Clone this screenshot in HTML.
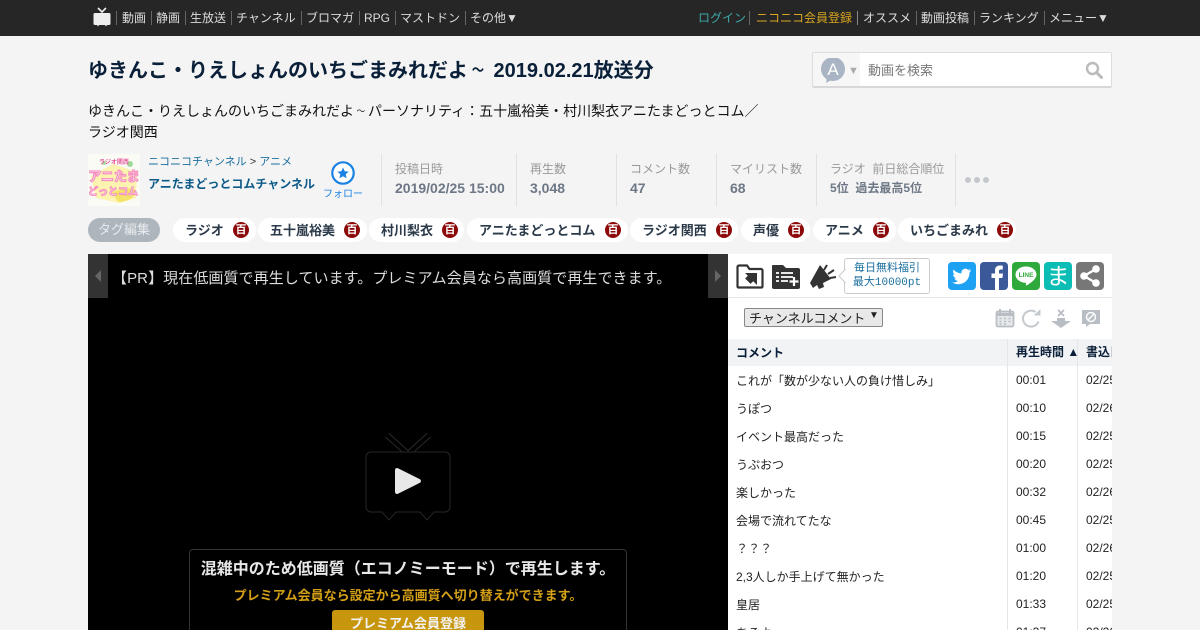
<!DOCTYPE html>
<html lang="ja"><head><meta charset="utf-8"><title>ゆきんこ・りえしょんのいちごまみれだよ～</title>
<style>
*{box-sizing:border-box}
html,body{margin:0;padding:0;width:1200px;height:630px;overflow:hidden}
#w{position:absolute;left:0;top:0;width:1200px;height:630px;overflow:hidden;background:#f4f4f4;font-family:"Liberation Sans","WenQuanYi Zen Hei","Noto Sans CJK JP",sans-serif;color:#000}
.a{position:absolute;white-space:nowrap}
#hd{left:0;top:0;width:1200px;height:36px;background:#262626}
.n{position:absolute;top:10px;font-size:12px;line-height:16px;color:#ddd;white-space:nowrap}
.s{position:absolute;top:11px;width:1px;height:14px;background:#666}
.lab{position:absolute;top:161px;font-size:12px;line-height:16px;color:#999;white-space:nowrap}
.val{position:absolute;top:180px;font-size:14px;line-height:17px;font-weight:bold;color:#6d7785;white-space:nowrap}
.dv{position:absolute;top:154px;width:1px;height:52px;background:#e2e2e2}
.tag{position:absolute;top:218px;height:24px;background:#fff;border-radius:12px}
.tag b{position:absolute;top:5px;font-size:13px;line-height:16px;font-weight:bold;color:#2b3a4a;white-space:nowrap}
.tag i{position:absolute;top:4px;width:16px;height:16px;border-radius:8px;background:#8c0a0a;color:#fff;font-style:normal;font-weight:bold;font-size:11px;line-height:16px;text-align:center}
.r{position:absolute;left:736px;font-size:12px;line-height:16px;color:#222;white-space:nowrap}
.t{position:absolute;left:1016px;font-size:12px;line-height:16px;color:#222}
.d{position:absolute;left:1086px;width:26px;overflow:hidden;font-size:12px;line-height:16px;color:#222}
.sn{position:absolute;top:262px;width:28px;height:28px;border-radius:4px}
.w{display:inline-block;transform:scale(.62,.7)}
</style></head><body><div id="w">
<div class="a" id="hd"></div>
<svg class="a" style="left:93px;top:7px" width="19" height="20" viewBox="0 0 19 20"><path d="M5 1l4 4 4-4" stroke="#eee" stroke-width="1.600" fill="none"/><path d="M2 6h14a1.500 1.500 0 0 1 1.500 1.500v9a1.500 1.500 0 0 1-1.500 1.500h-2l-1 1.500-1-1.500H6l-1 1.500-1-1.500H2a1.500 1.500 0 0 1-1.500-1.500v-9A1.500 1.500 0 0 1 2 6z" fill="#eee"/></svg>
<div class="s" style="left:116px"></div><span class="n" style="left:122px">動画</span>
<div class="s" style="left:151px"></div><span class="n" style="left:156px">静画</span>
<div class="s" style="left:185px"></div><span class="n" style="left:190px">生放送</span>
<div class="s" style="left:231px"></div><span class="n" style="left:236px">チャンネル</span>
<div class="s" style="left:301px"></div><span class="n" style="left:306px">ブロマガ</span>
<div class="s" style="left:359px"></div><span class="n" style="left:364px">RPG</span>
<div class="s" style="left:395px"></div><span class="n" style="left:400px">マストドン</span>
<div class="s" style="left:465px"></div><span class="n" style="left:470px">その他▼</span>
<span class="n" style="left:698px;color:#3fa8a8">ログイン</span>
<div class="s" style="left:749px"></div><span class="n" style="left:756px;color:#d9a520">ニコニコ会員登録</span>
<div class="s" style="left:857px;background:#888"></div><span class="n" style="left:863px">オススメ</span>
<div class="s" style="left:916px"></div><span class="n" style="left:921px">動画投稿</span>
<div class="s" style="left:974px"></div><span class="n" style="left:979px">ランキング</span>
<div class="s" style="left:1044px"></div><span class="n" style="left:1049px">メニュー▼</span>

<div class="a" style="left:88px;top:57px;font-size:20px;line-height:28px;font-weight:bold;color:#0a1f38">ゆきんこ・りえしょんのいちごまみれだよ<span class="w">～</span> 2019.02.21放送分</div>
<div class="a" style="left:812px;top:52px;width:300px;height:36px;background:#fff;border:1px solid #ddd;border-bottom:2px solid #d8d8d8;border-radius:2px"></div>
<div class="a" style="left:813px;top:53px;width:47px;height:33px;background:#f6f6f6"></div>
<svg class="a" style="left:820px;top:58px" width="26" height="26" viewBox="0 0 26 26"><circle cx="13" cy="11" r="12" fill="#a9b5c4"/><path d="M7 19l-1 6 7-4z" fill="#a9b5c4"/><text x="13" y="17" text-anchor="middle" font-size="17" fill="#fff" font-family="Liberation Sans">A</text></svg>
<div class="a" style="left:848px;top:65px;font-size:11px;line-height:12px;color:#aaa">▼</div>
<div class="a" style="left:868px;top:62px;font-size:13px;line-height:18px;color:#777">動画を検索</div>
<svg class="a" style="left:1085px;top:61px" width="18" height="18" viewBox="0 0 18 18"><circle cx="7.500" cy="7.500" r="5.500" fill="none" stroke="#bbb" stroke-width="2.400"/><path d="M11.500 11.500l5 5" stroke="#bbb" stroke-width="3" stroke-linecap="round"/></svg>

<div class="a" style="left:88px;top:101px;font-size:14px;line-height:21px;color:#111">ゆきんこ・りえしょんのいちごまみれだよ<span class="w">～</span>パーソナリティ：五十嵐裕美・村川梨衣アニたまどっとコム／<br>ラジオ関西</div>

<svg class="a" style="left:88px;top:154px" width="52" height="52" viewBox="0 0 52 52"><rect width="52" height="52" fill="#fbfbf6"/><path d="M3 22L25 10l24 8-1 26-16 5-24-5z" fill="#fdf3b0"/><path d="M24 38c10-3 19-5 23-2 2 6-6 12-17 12z" fill="#f3e36a"/><circle cx="42" cy="10" r="3" fill="#9fdc9a"/><circle cx="16" cy="9" r="2" fill="#9fdc9a"/><text x="26" y="10" text-anchor="middle" font-size="6" fill="#e65a9c" font-weight="bold">ラジオ関西</text><text x="26" y="27" text-anchor="middle" font-size="13" font-weight="bold" fill="#fff" stroke="#f590c0" stroke-width="1.200">アニたま</text><text x="25" y="41" text-anchor="middle" font-size="10" font-weight="bold" fill="#fff" stroke="#f590c0" stroke-width="1">どっとコム</text></svg>
<div class="a" style="left:148px;top:154px;font-size:11px;line-height:16px;color:#1a6f9f">ニコニコチャンネル <span style="color:#333">&gt;</span> アニメ</div>
<div class="a" style="left:148px;top:176px;font-size:12px;line-height:16px;font-weight:bold;color:#0c5a8a">アニたまどっとコムチャンネル</div>
<svg class="a" style="left:331px;top:161px" width="24" height="24" viewBox="0 0 24 24"><circle cx="12" cy="12" r="10.700" fill="#fff" stroke="#1a82e2" stroke-width="2.200"/><path d="M12 6.500l1.700 3.700 4 .4-3 2.700.9 4-3.600-2.100-3.600 2.100.9-4-3-2.700 4-.4z" fill="#1a82e2"/></svg>
<div class="a" style="left:323px;top:187px;font-size:10px;line-height:15px;color:#1a82e2;letter-spacing:0">フォロー</div>

<div class="dv" style="left:381px"></div>
<span class="lab" style="left:395px">投稿日時</span><span class="val" style="left:395px">2019/02/25 15:00</span>
<div class="dv" style="left:516px"></div>
<span class="lab" style="left:530px">再生数</span><span class="val" style="left:530px">3,048</span>
<div class="dv" style="left:616px"></div>
<span class="lab" style="left:630px">コメント数</span><span class="val" style="left:630px">47</span>
<div class="dv" style="left:716px"></div>
<span class="lab" style="left:730px">マイリスト数</span><span class="val" style="left:730px">68</span>
<div class="dv" style="left:816px"></div>
<span class="lab" style="left:830px">ラジオ &nbsp;前日総合順位</span><span class="val" style="left:830px;font-size:12px">5位 &nbsp;過去最高5位</span>
<div class="dv" style="left:955px"></div>
<div class="a" style="left:965px;top:177px;width:6px;height:6px;border-radius:3px;background:#c4c8cc"></div>
<div class="a" style="left:974px;top:177px;width:6px;height:6px;border-radius:3px;background:#c4c8cc"></div>
<div class="a" style="left:983px;top:177px;width:6px;height:6px;border-radius:3px;background:#c4c8cc"></div>

<div class="a" style="left:88px;top:218px;width:72px;height:24px;border-radius:12px;background:#adb5bd;color:#e8ecef;font-size:13px;line-height:24px;text-align:center">タグ編集</div>
<div class="tag" style="left:173px;width:83px"><b style="left:12px">ラジオ</b><i style="left:60px">百</i></div>
<div class="tag" style="left:258px;width:109px"><b style="left:12px">五十嵐裕美</b><i style="left:86px">百</i></div>
<div class="tag" style="left:369px;width:95px"><b style="left:12px">村川梨衣</b><i style="left:73px">百</i></div>
<div class="tag" style="left:467px;width:161px"><b style="left:12px">アニたまどっとコム</b><i style="left:138px">百</i></div>
<div class="tag" style="left:630px;width:108px"><b style="left:12px">ラジオ関西</b><i style="left:86px">百</i></div>
<div class="tag" style="left:741px;width:69px"><b style="left:12px">声優</b><i style="left:47px">百</i></div>
<div class="tag" style="left:813px;width:83px"><b style="left:12px">アニメ</b><i style="left:60px">百</i></div>
<div class="tag" style="left:898px;width:118px"><b style="left:12px">いちごまみれ</b><i style="left:99px">百</i></div>

<div class="a" style="left:88px;top:254px;width:640px;height:376px;background:#000"></div>
<div class="a" style="left:88px;top:254px;width:20px;height:44px;background:#333"></div>
<div class="a" style="left:708px;top:254px;width:20px;height:44px;background:#333"></div>
<svg class="a" style="left:94px;top:269px" width="8" height="14"><path d="M7 1v12L1 7z" fill="#666"/></svg>
<svg class="a" style="left:714px;top:269px" width="8" height="14"><path d="M1 1v12l6-6z" fill="#666"/></svg>
<div class="a" style="left:112px;top:268px;font-size:15px;line-height:22px;color:#ddd;letter-spacing:.08px">【PR】現在低画質で再生しています。プレミアム会員なら高画質で再生できます。</div>
<svg class="a" style="left:360px;top:430px" width="96" height="94" viewBox="0 0 96 94"><path d="M27 5l21 19L69 5" stroke="#2a2a2a" stroke-width="6" fill="none"/><path d="M27 5l21 19L69 5" stroke="#000" stroke-width="4" fill="none"/><path d="M11 22h74a5 5 0 0 1 5 5v50a5 5 0 0 1-5 5H74l-7 8-7-8H36l-7 8-7-8H11a5 5 0 0 1-5-5V27a5 5 0 0 1 5-5z" fill="#000" stroke="#262626" stroke-width="1"/><path d="M35 40a2 2 0 0 1 3-1.700l22 11a2 2 0 0 1 0 3.400l-22 11a2 2 0 0 1-3-1.700z" fill="#e8e8e8"/></svg>
<div class="a" style="left:189px;top:549px;width:438px;height:90px;border:1px solid #333;border-radius:4px;background:#000"></div>
<div class="a" style="left:189px;top:558px;width:438px;text-align:center;font-size:16px;line-height:24px;font-weight:bold;color:#e8e8e8">混雑中のため低画質（エコノミーモード）で再生します。</div>
<div class="a" style="left:189px;top:586px;width:438px;text-align:center;font-size:13px;line-height:20px;font-weight:bold;color:#d4a017">プレミアム会員なら設定から高画質へ切り替えができます。</div>
<div class="a" style="left:332px;top:610px;width:152px;height:30px;border-radius:3px;background:#c8960c;text-align:center;font-size:13px;line-height:28px;font-weight:bold;color:#f2f2f2">プレミアム会員登録</div>

<div class="a" style="left:728px;top:254px;width:384px;height:376px;background:#fff;overflow:hidden"></div>
<div class="a" style="left:728px;top:297px;width:384px;height:1px;background:#e8e8e8"></div>
<svg class="a" style="left:736px;top:264px" width="28" height="25" viewBox="0 0 28 25"><path d="M1.500 22.500V3a1.500 1.500 0 0 1 1.500-1.500h8L13.500 5H25a1.500 1.500 0 0 1 1.500 1.500v16a1 1 0 0 1-1 1H2.500a1 1 0 0 1-1-1z" fill="#fff" stroke="#333" stroke-width="2.200"/><path d="M9 9h12v12l-3.800-3.800-2.700 2.700-5.400-5.400 2.700-2.700z" fill="#333"/></svg>
<svg class="a" style="left:772px;top:264px" width="28" height="25" viewBox="0 0 28 25"><path d="M0 2a1 1 0 0 1 1-1h10l3 3h12a2 2 0 0 1 2 2v17a2 2 0 0 1-2 2H2a2 2 0 0 1-2-2z" fill="#333"/><path d="M4 9h3M9 9h12M4 13h3M9 13h12M4 17h3M9 17h7" stroke="#fff" stroke-width="1.800"/><path d="M22 13v9M17.500 17.500h9" stroke="#fff" stroke-width="2.200"/></svg>
<svg class="a" style="left:809px;top:264px" width="28" height="26" viewBox="0 0 28 26"><path d="M1 19L11 1l11 14-8 4 1 4-5 2-2-4-4 3z" fill="#333"/><path d="M15 6l3-5M19 10l6-4M21 14l6-1" stroke="#333" stroke-width="2"/></svg>
<div class="a" style="left:844px;top:258px;width:86px;height:36px;background:#fff;border:1px solid #ccc;border-radius:3px;font:11px/14px 'Liberation Mono','WenQuanYi Zen Hei','Noto Sans CJK JP',monospace;color:#1a6f9f;text-align:center;padding-top:3px">毎日無料福引<br>最大10000pt</div>
<svg class="a" style="left:838px;top:268px" width="8" height="16"><path d="M7.500 1L1 8l6.500 7" fill="#fff" stroke="#ccc"/></svg>
<div class="sn" style="left:948px;background:#1da1f2"></div>
<svg class="a" style="left:948px;top:262px" width="28" height="28" viewBox="0 0 28 28"><path d="M23 8.500c-.7.300-1.400.500-2.200.6.800-.5 1.400-1.200 1.700-2.100-.7.400-1.600.8-2.400.9a3.900 3.900 0 0 0-6.600 3.500C10.300 11.300 7.500 9.800 5.600 7.500a3.900 3.900 0 0 0 1.200 5.200c-.6 0-1.200-.2-1.700-.5 0 1.900 1.300 3.500 3.100 3.900-.6.200-1.200.2-1.800.1.500 1.500 1.900 2.600 3.600 2.700A7.900 7.900 0 0 1 4.300 20.500c1.700 1.100 3.800 1.700 6 1.700 7.200 0 11.200-6 11.200-11.200v-.5c.6-.5 1.100-1.100 1.500-1.800z" fill="#fff"/></svg>
<div class="sn" style="left:980px;background:#3b5998"></div>
<svg class="a" style="left:980px;top:262px" width="28" height="28" viewBox="0 0 28 28"><path d="M15 28V16h-3.500v-4.500H15V8.500C15 5 17 3.500 20 3.500c1.400 0 2.500.1 2.800.2v3.800h-2c-1.500 0-1.800.7-1.800 1.800v2.200h4l-.6 4.500H19v12z" fill="#fff"/></svg>
<div class="sn" style="left:1012px;background:#30a93c"></div>
<svg class="a" style="left:1012px;top:262px" width="28" height="28" viewBox="0 0 28 28"><path d="M14 4.500c6 0 10.500 3.600 10.500 8.300 0 3.700-5 8-10 10.700-.7.300-.6-.7-.5-1.500.1-.8-.2-1-1-1.200C7.500 20.100 3.500 16.800 3.500 12.800 3.500 8.100 8 4.500 14 4.500z" fill="#fff"/><text x="14" y="15" text-anchor="middle" font-size="6.500" font-weight="bold" fill="#30a93c" font-family="Liberation Sans">LINE</text></svg>
<div class="sn" style="left:1044px;background:#0bbdb5"></div>
<div class="a" style="left:1044px;top:262px;width:28px;height:28px;text-align:center;font-size:23px;line-height:28px;color:#fff">ま</div>
<div class="sn" style="left:1076px;background:#777"></div>
<svg class="a" style="left:1076px;top:262px" width="28" height="28" viewBox="0 0 28 28"><path d="M20 7L8 14l12 7" stroke="#fff" stroke-width="2.400" fill="none"/><circle cx="20" cy="7" r="3.800" fill="#fff"/><circle cx="8" cy="14" r="3.800" fill="#fff"/><circle cx="20" cy="21" r="3.800" fill="#fff"/></svg>

<div class="a" style="left:744px;top:308px;width:139px;height:19px;background:#e8e8e8;border:1px solid #888;border-radius:2px;font-size:13px;line-height:20px;color:#222;padding-left:4px">チャンネルコメント<span style="position:absolute;left:124px;top:-2px;font-size:10px;line-height:18px">▼</span></div>
<svg class="a" style="left:995px;top:308px" width="20" height="20" viewBox="0 0 20 20"><rect x="1.500" y="3.500" width="17" height="15" rx="1.500" fill="#e6e8ea" stroke="#b8bec4" stroke-width="1.800"/><path d="M1 6.500h18" stroke="#b8bec4" stroke-width="3"/><path d="M5 1v4M15 1v4" stroke="#b8bec4" stroke-width="2"/><path d="M4.500 10.500h2M9 10.500h2M13.500 10.500h2M4.500 13.500h2M9 13.500h2M13.500 13.500h2M4.500 16h2M9 16h2" stroke="#b8bec4" stroke-width="1.600"/></svg>
<svg class="a" style="left:1021px;top:308px" width="20" height="20" viewBox="0 0 20 20"><path d="M17.500 13.500A8 8 0 1 1 14.500 4" fill="none" stroke="#c4c9ce" stroke-width="2"/><path d="M12.500 7.500h7V1z" fill="#c4c9ce"/></svg>
<svg class="a" style="left:1051px;top:309px" width="20" height="20" viewBox="0 0 20 20"><path d="M6 9h8v3h6l-10 7L0 12h6z" fill="#b8bec4"/><path d="M7 1l6 6M13 1L7 7" stroke="#b8bec4" stroke-width="1.800"/></svg>
<svg class="a" style="left:1081px;top:309px" width="20" height="20" viewBox="0 0 20 20"><path d="M1 1h18v14H9l-4 3v-3H1z" fill="#b8bec4"/><circle cx="10" cy="8" r="4.500" fill="none" stroke="#fff" stroke-width="1.400"/><path d="M7 11l6-6" stroke="#fff" stroke-width="1.400"/></svg>

<div class="a" style="left:728px;top:339px;width:384px;height:27px;background:#f1f3f5"></div>
<div class="a" style="left:1007px;top:339px;width:1px;height:291px;background:#e4e6e8"></div>
<div class="a" style="left:1077px;top:339px;width:1px;height:291px;background:#e4e6e8"></div>
<div class="r" style="top:345px;font-weight:bold;color:#0a1f38">コメント</div>
<div class="t" style="top:344px;font-weight:bold;color:#0a1f38;white-space:nowrap">再生時間 ▲</div>
<div class="d" style="top:344px;font-weight:bold;color:#0a1f38;white-space:nowrap">書込日時</div>
<div class="r" style="top:373px">これが「数が少ない人の負け惜しみ」</div><div class="t" style="top:372px">00:01</div><div class="d" style="top:372px">02/25</div>
<div class="r" style="top:401px">うぽつ</div><div class="t" style="top:400px">00:10</div><div class="d" style="top:400px">02/26</div>
<div class="r" style="top:429px">イベント最高だった</div><div class="t" style="top:428px">00:15</div><div class="d" style="top:428px">02/25</div>
<div class="r" style="top:457px">うぷおつ</div><div class="t" style="top:456px">00:20</div><div class="d" style="top:456px">02/25</div>
<div class="r" style="top:485px">楽しかった</div><div class="t" style="top:484px">00:32</div><div class="d" style="top:484px">02/26</div>
<div class="r" style="top:513px">会場で流れてたな</div><div class="t" style="top:512px">00:45</div><div class="d" style="top:512px">02/25</div>
<div class="r" style="top:541px">？？？</div><div class="t" style="top:540px">01:00</div><div class="d" style="top:540px">02/26</div>
<div class="r" style="top:569px">2,3人しか手上げて無かった</div><div class="t" style="top:568px">01:20</div><div class="d" style="top:568px">02/25</div>
<div class="r" style="top:597px">皇居</div><div class="t" style="top:596px">01:33</div><div class="d" style="top:596px">02/25</div>
<div class="r" style="top:625px">あるよ</div><div class="t" style="top:624px">01:37</div><div class="d" style="top:624px">02/26</div>
</div></body></html>
